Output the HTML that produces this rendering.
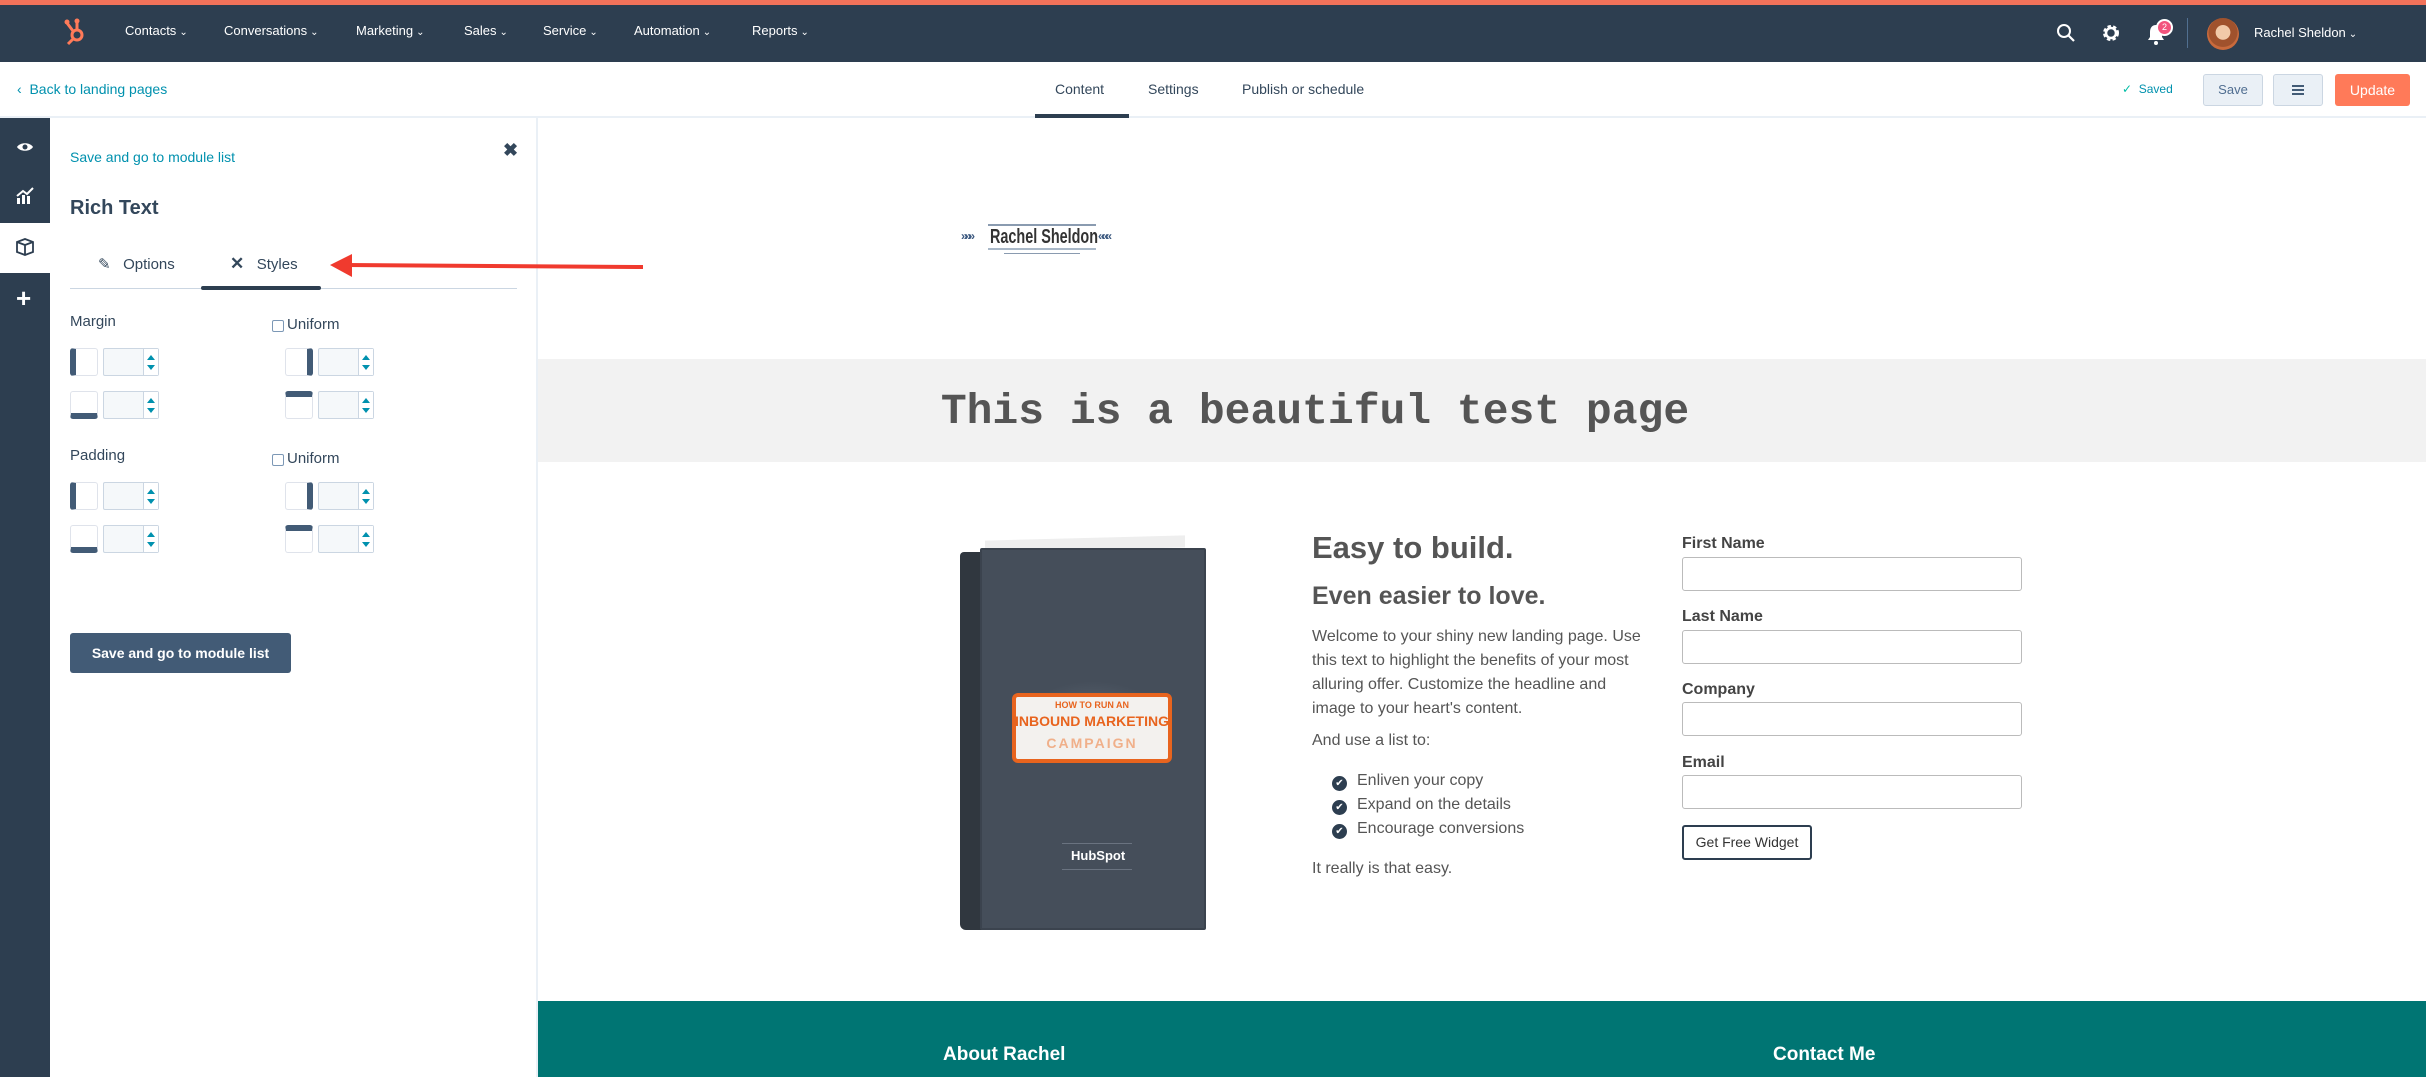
<!DOCTYPE html>
<html><head><meta charset="utf-8"><style>
*{box-sizing:border-box;margin:0;padding:0}
body{width:2426px;height:1077px;overflow:hidden;position:relative;background:#fff;font-family:"Liberation Sans",sans-serif}
.a{position:absolute}
.top{left:0;top:0;width:2426px;height:62px;background:#2d3e50;border-top:5px solid #f2725a}
.nav{top:23px;color:#fff;font-size:13px;white-space:nowrap}
.nav small{font-size:10px;margin-left:3px}
.sub{left:0;top:62px;width:2426px;height:56px;background:#fff;border-bottom:2px solid #eaf0f6}
.teal{color:#0091ae}
.lb{left:0;top:118px;width:50px;height:959px;background:#2d3e50}
.panel{left:50px;top:118px;width:488px;height:959px;background:#fff;border-right:2px solid #eaf0f6}
.lbl{font-size:15px;color:#33475b}
.ib{width:28px;height:28px;border:1px solid #dfe3eb;border-radius:3px;background:#fff;overflow:hidden}
.inp{width:56px;height:28px;border:1px solid #cbd6e2;background:#f5f8fa;border-radius:2px}
.inp:after{content:"";position:absolute;right:0;top:0;width:14px;height:26px;border-left:1px solid #cbd6e2;background:#fff}
.inp i{position:absolute;right:3px;width:0;height:0;border-left:4px solid transparent;border-right:4px solid transparent;z-index:2}
.inp .u{top:6px;border-bottom:5px solid #0091ae}.inp .d{top:16px;border-top:5px solid #0091ae}
.cb{width:12px;height:12px;border:1px solid #7c98b6;border-radius:2px;background:#fff}
.t{color:#555}
.fl{font-size:16px;font-weight:bold;color:#444;left:1682px}
.fi{left:1682px;width:340px;height:34px;border:1px solid #bbb;border-radius:3px}
.li{left:1332px;font-size:16px;color:#555}
.li:before{content:"✔";display:inline-block;width:15px;height:15px;border-radius:50%;background:#2d3e50;color:#fff;font-size:10px;text-align:center;line-height:15px;margin-right:10px;vertical-align:-1px}
</style></head><body>
<div class="a top"></div>
<svg class="a" style="left:64px;top:18px" width="22" height="28" viewBox="0 0 22 28"><g stroke="#ff7a59" stroke-width="3" fill="none"><circle cx="13" cy="17" r="5"/><line x1="9" y1="13" x2="3" y2="5"/><line x1="13" y1="12" x2="13" y2="3"/><line x1="9" y1="21" x2="4" y2="26"/></g><circle cx="3" cy="4" r="2.5" fill="#ff7a59"/><circle cx="13" cy="3" r="2.5" fill="#ff7a59"/></svg>
<div class="a nav" style="left:125px">Contacts<small>⌄</small></div>
<div class="a nav" style="left:224px">Conversations<small>⌄</small></div>
<div class="a nav" style="left:356px">Marketing<small>⌄</small></div>
<div class="a nav" style="left:464px">Sales<small>⌄</small></div>
<div class="a nav" style="left:543px">Service<small>⌄</small></div>
<div class="a nav" style="left:634px">Automation<small>⌄</small></div>
<div class="a nav" style="left:752px">Reports<small>⌄</small></div>
<svg class="a" style="left:2056px;top:23px" width="20" height="20" viewBox="0 0 20 20"><circle cx="8" cy="8" r="6" stroke="#fff" stroke-width="2" fill="none"/><line x1="12.5" y1="12.5" x2="18" y2="18" stroke="#fff" stroke-width="2.2"/></svg>
<svg class="a" style="left:2101px;top:23px" width="20" height="20" viewBox="0 0 20 20"><circle cx="10" cy="10" r="6" stroke="#fff" stroke-width="4" stroke-dasharray="3 2" fill="none"/><circle cx="10" cy="10" r="5" stroke="#fff" stroke-width="2.5" fill="none"/></svg>
<svg class="a" style="left:2146px;top:22px" width="20" height="24" viewBox="0 0 20 24"><path d="M10 3C6 3 4 6 4 10v5l-2 3h16l-2-3v-5c0-4-2-7-6-7z" fill="#fff"/><circle cx="10" cy="21" r="2" fill="#fff"/></svg>
<div class="a" style="left:2156px;top:19px;width:17px;height:17px;border-radius:50%;background:#f2547d;border:2px solid #fff;color:#fff;font-size:9px;text-align:center;line-height:13px">2</div>
<div class="a" style="left:2187px;top:18px;width:1px;height:30px;background:#516f90"></div>
<div class="a" style="left:2207px;top:18px;width:32px;height:32px;border-radius:50%;background:radial-gradient(circle at 50% 45%,#f1c9a8 0 30%,#a0522d 32% 60%,#c96a3c 62%)"></div>
<div class="a nav" style="left:2254px;top:25px">Rachel Sheldon<small>⌄</small></div>
<div class="a sub"></div>
<div class="a teal" style="left:17px;top:81px;font-size:14px">‹&nbsp; Back to landing pages</div>
<div class="a" style="left:1055px;top:81px;font-size:14px;color:#33475b">Content</div>
<div class="a" style="left:1035px;top:114px;width:94px;height:4px;background:#2d3e50"></div>
<div class="a" style="left:1148px;top:81px;font-size:14px;color:#33475b">Settings</div>
<div class="a" style="left:1242px;top:81px;font-size:14px;color:#33475b">Publish or schedule</div>
<div class="a" style="left:2122px;top:82px;font-size:12px;color:#0091ae"><span style="color:#00bda5">✓</span>&nbsp; Saved</div>
<div class="a" style="left:2203px;top:74px;width:60px;height:32px;background:#eaf0f6;border:1px solid #cbd6e2;border-radius:3px;font-size:13px;color:#506e91;text-align:center;line-height:30px">Save</div>
<div class="a" style="left:2273px;top:74px;width:50px;height:32px;background:#eaf0f6;border:1px solid #cbd6e2;border-radius:3px"><div class="a" style="left:18px;top:10px;width:12px;height:10px;border-top:2px solid #425b76;border-bottom:2px solid #425b76"></div><div class="a" style="left:18px;top:14px;width:12px;height:2px;background:#425b76"></div></div>
<div class="a" style="left:2335px;top:74px;width:75px;height:32px;background:#ff7a59;border-radius:3px;font-size:14px;color:#fff;text-align:center;line-height:32px">Update</div>

<div class="a lb"></div>
<div class="a" style="left:0;top:223px;width:50px;height:50px;background:#fff"></div>
<svg class="a" style="left:16px;top:140px" width="18" height="14" viewBox="0 0 18 14"><path d="M1 7C4 2 14 2 17 7C14 12 4 12 1 7z" fill="#fff"/><circle cx="9" cy="7" r="2.5" fill="#2d3e50"/></svg>
<svg class="a" style="left:16px;top:187px" width="18" height="18" viewBox="0 0 18 18"><g fill="#fff"><rect x="1" y="11" width="3" height="6"/><rect x="6" y="8" width="3" height="9"/><rect x="11" y="9" width="3" height="8"/></g><path d="M1 9L7 4L11 7L17 1" stroke="#fff" stroke-width="2" fill="none"/></svg>
<svg class="a" style="left:15px;top:237px" width="20" height="20" viewBox="0 0 20 20"><path d="M10 2L18 5V15L10 18L2 15V5Z M2 5L10 8L18 5 M10 8V18" stroke="#2d3e50" stroke-width="1.8" fill="none"/></svg>
<div class="a" style="left:16px;top:288px;color:#fff;font-size:26px;font-weight:bold;line-height:20px">+</div>

<div class="a panel"></div>
<div class="a teal" style="left:70px;top:149px;font-size:14px">Save and go to module list</div>
<div class="a" style="left:503px;top:140px;font-size:18px;color:#33475b;font-weight:bold">✖</div>
<div class="a" style="left:70px;top:197px;font-size:20px;font-weight:bold;color:#33475b">Rich Text</div>
<div class="a" style="left:98px;top:255px;font-size:15px;color:#33475b">✎&nbsp;&nbsp; Options</div>
<div class="a" style="left:230px;top:254px;font-size:15px;color:#33475b"><b style="font-size:17px">✕</b>&nbsp;&nbsp; Styles</div>
<div class="a" style="left:70px;top:288px;width:447px;height:1px;background:#cbd6e2"></div>
<div class="a" style="left:201px;top:286px;width:120px;height:4px;border-radius:2px;background:#2d3e50"></div>
<svg class="a" style="left:325px;top:250px" width="320" height="30" viewBox="0 0 320 30"><line x1="20" y1="15" x2="318" y2="17" stroke="#f03a2e" stroke-width="4"/><path d="M5 15L27 4L27 27Z" fill="#f03a2e"/></svg>

<div class="a lbl" style="left:70px;top:313px">Margin</div>
<div class="a cb" style="left:272px;top:320px"></div><div class="a lbl" style="left:287px;top:316px">Uniform</div>
<div class="a lbl" style="left:70px;top:447px">Padding</div>
<div class="a cb" style="left:272px;top:454px"></div><div class="a lbl" style="left:287px;top:450px">Uniform</div>

<div class="a ib" style="left:70px;top:348px;border-left:6px solid #425b76"></div><div class="a inp" style="left:103px;top:348px"><i class="u"></i><i class="d"></i></div>
<div class="a ib" style="left:285px;top:348px;border-right:6px solid #425b76"></div><div class="a inp" style="left:318px;top:348px"><i class="u"></i><i class="d"></i></div>
<div class="a ib" style="left:70px;top:391px;border-bottom:6px solid #425b76"></div><div class="a inp" style="left:103px;top:391px"><i class="u"></i><i class="d"></i></div>
<div class="a ib" style="left:285px;top:391px;border-top:6px solid #425b76"></div><div class="a inp" style="left:318px;top:391px"><i class="u"></i><i class="d"></i></div>
<div class="a ib" style="left:70px;top:482px;border-left:6px solid #425b76"></div><div class="a inp" style="left:103px;top:482px"><i class="u"></i><i class="d"></i></div>
<div class="a ib" style="left:285px;top:482px;border-right:6px solid #425b76"></div><div class="a inp" style="left:318px;top:482px"><i class="u"></i><i class="d"></i></div>
<div class="a ib" style="left:70px;top:525px;border-bottom:6px solid #425b76"></div><div class="a inp" style="left:103px;top:525px"><i class="u"></i><i class="d"></i></div>
<div class="a ib" style="left:285px;top:525px;border-top:6px solid #425b76"></div><div class="a inp" style="left:318px;top:525px"><i class="u"></i><i class="d"></i></div>

<div class="a" style="left:70px;top:633px;width:221px;height:40px;background:#425b76;border-radius:3px;color:#fff;font-size:14px;font-weight:bold;text-align:center;line-height:40px">Save and go to module list</div>

<!-- preview logo -->
<div class="a" style="left:988px;top:224px;width:108px;height:2px;background:#8a9bb0"></div>
<div class="a" style="left:988px;top:248px;width:108px;height:2px;background:#a9b8c8"></div>
<div class="a" style="left:1004px;top:253px;width:76px;height:1px;background:#8a9bb0"></div>
<div class="a" style="left:961px;top:229px;font-size:12px;font-weight:bold;color:#3d5a80;letter-spacing:-3px">»»»</div>
<div class="a" style="left:1098px;top:229px;font-size:12px;font-weight:bold;color:#3d5a80;letter-spacing:-3px">«««</div>
<div class="a" style="left:990px;top:226px;font-size:20px;font-weight:bold;color:#333;transform:scaleX(0.72);transform-origin:left;white-space:nowrap">Rachel Sheldon</div>

<div class="a" style="left:538px;top:359px;width:1888px;height:103px;background:#f2f2f2"></div>
<div class="a" style="left:715px;top:387px;width:1200px;text-align:center;font-family:'Liberation Mono',monospace;font-weight:bold;font-size:43px;color:#555">This is a beautiful test page</div>

<!-- book -->
<div class="a" style="left:960px;top:552px;width:30px;height:378px;background:#30373f;border-radius:4px 0 0 6px"></div>
<div class="a" style="left:985px;top:538px;width:200px;height:12px;background:#eee;transform:skewY(-1.5deg)"></div>
<div class="a" style="left:980px;top:548px;width:226px;height:382px;background:#454e5a;border:2px solid #3b434e;border-radius:2px"></div>
<div class="a" style="left:1022px;top:681px;width:142px;height:82px;background:radial-gradient(ellipse,#5d6672,#454e5a 70%)"></div>
<div class="a" style="left:1012px;top:693px;width:160px;height:70px;background:#f3f1ee;border:4px solid #e8641e;border-radius:6px"></div>
<div class="a" style="left:1012px;top:700px;width:160px;text-align:center;font-size:9px;font-weight:bold;color:#e8641e">HOW TO RUN AN</div>
<div class="a" style="left:1012px;top:713px;width:160px;text-align:center;font-size:14px;font-weight:bold;color:#e8641e;white-space:nowrap">INBOUND MARKETING</div>
<div class="a" style="left:1012px;top:735px;width:160px;text-align:center;font-size:14px;font-weight:bold;color:#f0b08a;letter-spacing:2px">CAMPAIGN</div>
<div class="a" style="left:1062px;top:843px;width:70px;height:1px;background:#6a7380"></div>
<div class="a" style="left:1062px;top:869px;width:70px;height:1px;background:#6a7380"></div>
<div class="a" style="left:1071px;top:848px;font-size:13px;font-weight:bold;color:#fff">HubSpot</div>

<div class="a t" style="left:1312px;top:530px;font-size:31px;font-weight:bold">Easy to build.</div>
<div class="a t" style="left:1312px;top:582px;font-size:25px;font-weight:bold">Even easier to love.</div>
<div class="a t" style="left:1312px;top:625px;font-size:16px;line-height:24px;width:336px">Welcome to your shiny new landing page. Use this text to highlight the benefits of your most alluring offer. Customize the headline and image to your heart's content.</div>
<div class="a t" style="left:1312px;top:732px;font-size:16px">And use a list to:</div>
<div class="a li" style="top:772px">Enliven your copy</div>
<div class="a li" style="top:796px">Expand on the details</div>
<div class="a li" style="top:820px">Encourage conversions</div>
<div class="a t" style="left:1312px;top:860px;font-size:16px">It really is that easy.</div>

<div class="a fl" style="top:535px">First Name</div><div class="a fi" style="top:557px"></div>
<div class="a fl" style="top:608px">Last Name</div><div class="a fi" style="top:630px"></div>
<div class="a fl" style="top:681px">Company</div><div class="a fi" style="top:702px"></div>
<div class="a fl" style="top:754px">Email</div><div class="a fi" style="top:775px"></div>
<div class="a" style="left:1682px;top:825px;width:130px;height:35px;border:2px solid #2d3e50;border-radius:3px;font-size:14px;color:#333;text-align:center;line-height:31px">Get Free Widget</div>

<div class="a" style="left:538px;top:1001px;width:1888px;height:76px;background:#007573"></div>
<div class="a" style="left:943px;top:1044px;font-size:19px;font-weight:bold;color:#fff">About Rachel</div>
<div class="a" style="left:1773px;top:1044px;font-size:19px;font-weight:bold;color:#fff">Contact Me</div>
</body></html>
